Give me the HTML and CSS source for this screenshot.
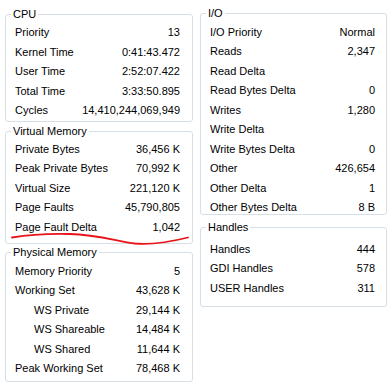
FILE: index.html
```html
<!DOCTYPE html>
<html lang="en">
<head>
  <meta charset="UTF-8" />
  <title>Process Performance</title>
  <link rel="stylesheet" href="styles.css">
</head>
<body>
  <div class="page">
    <div class="column left">
      <fieldset class="group cpu">
        <legend>CPU</legend>
        <div class="row"><span>Priority</span><span>13</span></div>
        <div class="row"><span>Kernel Time</span><span>0:41:43.472</span></div>
        <div class="row"><span>User Time</span><span>2:52:07.422</span></div>
        <div class="row"><span>Total Time</span><span>3:33:50.895</span></div>
        <div class="row"><span>Cycles</span><span>14,410,244,069,949</span></div>
      </fieldset>

      <fieldset class="group vmem">
        <legend>Virtual Memory</legend>
        <div class="row"><span>Private Bytes</span><span>36,456 K</span></div>
        <div class="row"><span>Peak Private Bytes</span><span>70,992 K</span></div>
        <div class="row"><span>Virtual Size</span><span>221,120 K</span></div>
        <div class="row"><span>Page Faults</span><span>45,790,805</span></div>
        <div class="row"><span>Page Fault Delta</span><span>1,042</span></div>
      </fieldset>

      <fieldset class="group pmem">
        <legend>Physical Memory</legend>
        <div class="row"><span>Memory Priority</span><span>5</span></div>
        <div class="row"><span>Working Set</span><span>43,628 K</span></div>
        <div class="row sub"><span>WS Private</span><span>29,144 K</span></div>
        <div class="row sub"><span>WS Shareable</span><span>14,484 K</span></div>
        <div class="row sub"><span>WS Shared</span><span>11,644 K</span></div>
        <div class="row"><span>Peak Working Set</span><span>78,468 K</span></div>
      </fieldset>
    </div>

    <div class="column right">
      <fieldset class="group io">
        <legend>I/O</legend>
        <div class="row"><span>I/O Priority</span><span>Normal</span></div>
        <div class="row"><span>Reads</span><span>2,347</span></div>
        <div class="row"><span>Read Delta</span><span></span></div>
        <div class="row"><span>Read Bytes Delta</span><span>0</span></div>
        <div class="row"><span>Writes</span><span>1,280</span></div>
        <div class="row"><span>Write Delta</span><span></span></div>
        <div class="row"><span>Write Bytes Delta</span><span>0</span></div>
        <div class="row"><span>Other</span><span>426,654</span></div>
        <div class="row"><span>Other Delta</span><span>1</span></div>
        <div class="row last"><span>Other Bytes Delta</span><span>8 B</span></div>
      </fieldset>

      <fieldset class="group handles">
        <legend>Handles</legend>
        <div class="row"><span>Handles</span><span>444</span></div>
        <div class="row"><span>GDI Handles</span><span>578</span></div>
        <div class="row"><span>USER Handles</span><span>311</span></div>
      </fieldset>
    </div>

    <!-- hand drawn mark under Page Fault Delta -->
    <svg class="scribble" width="389" height="391" viewBox="0 0 389 391">
      <path d="M12,237.5 C30,234.5 50,233.5 70,234 C95,234.5 115,240.5 135,243.5 C155,245 172,241.5 188,237.5"
            fill="none" stroke="#e8141a" stroke-width="1.8" stroke-linecap="round" />
    </svg>
  </div>
</body>
</html>
```

FILE: styles.css
```css
html, body {
  margin: 0;
  padding: 0;
  background: #fff;
  font-family: "Liberation Sans", Arial, sans-serif;
  font-size: 11px;
  color: #000;
}

.page {
  position: relative;
  width: 389px;
  height: 391px;
  display: flex;
  gap: 7px;
  padding: 8px 0 0 5px;
  box-sizing: border-box;
}

.column {
  display: flex;
  flex-direction: column;
}

.left {
  width: 188px;
}

.right {
  width: 187px;
  margin-top: -1px;
}

/* Group boxes */
.group {
  margin: 0;
  border: 1px solid #d5dfe5;
  border-radius: 3px;
  padding: 2px 12px 0 9px;
  min-width: 0;
}

.group legend {
  padding: 0 2px;
  margin-left: -4px;
  line-height: 13px;
}

.right .group {
  padding-right: 11px;
}

.row {
  display: flex;
  justify-content: space-between;
  height: 19.5px;
  line-height: 19.5px;
  white-space: nowrap;
}

.row.sub {
  padding-left: 19px;
}

.cpu {
  padding-bottom: 0;
}

.vmem {
  margin-top: 3px;
  padding-bottom: 5.5px;
}

.pmem {
  margin-top: 2.5px;
  padding-top: 2.5px;
  padding-bottom: 2.5px;
}

.io {
  padding-top: 2.5px;
  padding-bottom: 0;
}

/* the I/O box closes tight under its last line */
.io .row.last {
  height: 15.5px;
}

.handles {
  margin-top: 6px;
  padding-top: 6px;
  padding-bottom: 8px;
}

.scribble {
  position: absolute;
  top: 0;
  left: 0;
  pointer-events: none;
}
```
